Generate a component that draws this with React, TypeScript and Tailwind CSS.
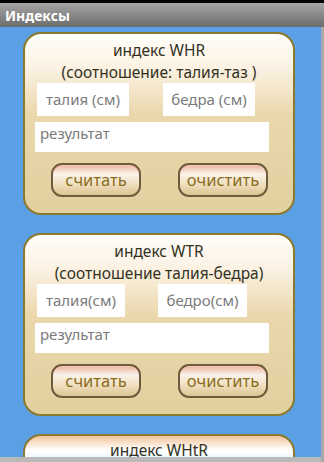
import React from "react";

type Calc = {
  name: string;
  subtitle: string;
  a: string;
  b: string;
  aW: string;
  bW: string;
  bGap: string;
};

const CALCS: Calc[] = [
  {
    name: "индекс WHR",
    subtitle: "(соотношение: талия-таз )",
    a: "талия (см)",
    b: "бедра (см)",
    aW: "w-[92px]",
    bW: "w-[92px]",
    bGap: "ml-[34px]",
  },
  {
    name: "индекс WTR",
    subtitle: "(соотношение талия-бедра)",
    a: "талия(см)",
    b: "бедро(см)",
    aW: "w-[88px]",
    bW: "w-[89px]",
    bGap: "ml-[33px]",
  },
];

const BTN =
  "flex h-[34px] w-[90px] items-center justify-center rounded-[11px] border-2 border-[#6f5b3d] bg-[linear-gradient(to_bottom,#eab49c_0%,#fbf3ea_30%,#f1e2c4_60%,#ddc593_100%)] text-[16.5px] text-[#8b6d1f] shadow-[inset_0_1px_0_#f6c7b3]";

function Card({ c }: { c: Calc }) {
  return (
    <div className="h-[183px] w-[272px] shrink-0 rounded-[18px] border-2 border-[#8b7a2e] bg-[linear-gradient(to_bottom,#fffefb_0%,#fbf1e1_20%,#ead7ac_45%,#e3d09f_100%)] pt-[5px]">
      <div className="text-center text-[15.5px] leading-[22px] text-[#33321f]">{c.name}</div>
      <div className="text-center text-[15.5px] leading-[22px] text-[#33321f]">{c.subtitle}</div>
      <div className="flex pl-[12px]">
        <div className={`flex h-[33px] items-center justify-center bg-white text-[15px] text-[#7b7b7b] ${c.aW}`}>{c.a}</div>
        <div className={`flex h-[33px] items-center justify-center bg-white text-[15px] text-[#7b7b7b] ${c.bGap} ${c.bW}`}>{c.b}</div>
      </div>
      <div className="ml-[10px] mt-[6px] h-[30px] w-[234px] bg-white pl-[5px] text-[15px] leading-[22px] text-[#7b7b7b]">
        результат
      </div>
      <div className="mt-[11px] flex pl-[26px]">
        <div className={BTN}>считать</div>
        <div className={`${BTN} ml-[37px]`}>очистить</div>
      </div>
    </div>
  );
}

export default function App() {
  return (
    <div className="flex h-[462px] w-[324px] flex-col overflow-hidden bg-black font-['Noto_Sans','Open_Sans',sans-serif]">
      <div className="h-[3px] shrink-0 bg-black" />
      <div className="flex h-[24px] shrink-0 items-center bg-[linear-gradient(to_bottom,#a5a5a5,#6c6c6c)] pl-[5px] text-[14px] font-bold text-white">
        Индексы
      </div>
      <div className="flex min-h-0 flex-1">
        <div className="flex min-w-0 flex-1 flex-col">
          <div className="flex min-h-0 flex-1 flex-col items-start gap-[18px] overflow-hidden bg-[#5b9fe4] pl-[23px] pt-[5px]">
            {CALCS.map((c) => (
              <Card key={c.name} c={c} />
            ))}
            <div className="h-[60px] w-[272px] shrink-0 rounded-t-[18px] border-2 border-[#8b7a2e] bg-[linear-gradient(to_bottom,#f2c49a_0%,#ffffff_25%,#cfe3f7_70%,#a9cdf1_100%)] pt-[3px]">
              <div className="text-center text-[15.5px] leading-[22px] text-[#33321f]">индекс WHtR</div>
            </div>
          </div>
          <div className="h-[5px] shrink-0 bg-[#b9b9b9]" />
        </div>
        <div className="w-[3px] shrink-0 bg-[#a9a9a9]" />
      </div>
    </div>
  );
}
